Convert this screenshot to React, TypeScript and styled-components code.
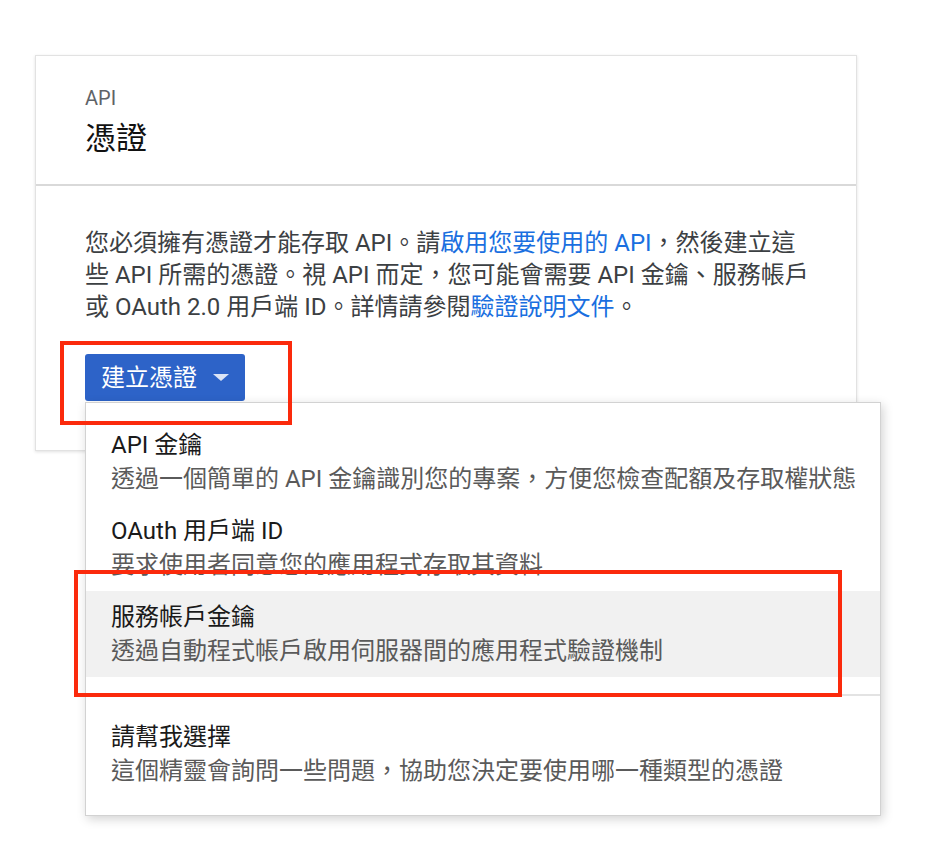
import React from "react";
import styled, { createGlobalStyle } from "styled-components";

const GlobalStyle = createGlobalStyle`
  html, body {
    margin: 0;
    padding: 0;
    background: #ffffff;
  }
  body {
    font-family: Roboto, "Noto Sans CJK TC", sans-serif;
  }
`;

const Page = styled.div`
  padding: 55px 0 0 35px;
  min-height: 848px;
  box-sizing: border-box;
`;

const Card = styled.section`
  width: 822px;
  box-sizing: border-box;
  background: #ffffff;
  border: 1px solid #e2e2e2;
  box-shadow: 0 1px 3px rgba(0, 0, 0, 0.12);
`;

const CardHeader = styled.header`
  padding: 30px 49px 25px;
  border-bottom: 2px solid #d9d9d9;
`;

const Eyebrow = styled.div`
  font-size: 20px;
  line-height: 24px;
  color: #5f6368;
`;

const Title = styled.h1`
  margin: 9px 0 0;
  font-size: 31px;
  line-height: 40px;
  font-weight: 400;
  color: #111111;
`;

const CardBody = styled.div`
  padding: 41px 49px 49px;
`;

const Intro = styled.p`
  margin: 0;
  font-size: 24px;
  line-height: 32px;
  color: #3c4043;
  white-space: nowrap;
`;

const Link = styled.a`
  color: #1a6fe0;
  text-decoration: none;
`;

const ActionWrap = styled.div`
  position: relative;
  margin-top: 31px;
  width: 160px;
`;

const PrimaryButton = styled.button`
  display: flex;
  align-items: center;
  gap: 16px;
  height: 47px;
  padding: 0 16px;
  border: none;
  border-radius: 3px;
  background: #2d63c8;
  color: #ffffff;
  font-family: inherit;
  font-size: 24px;
  line-height: 1;
  cursor: pointer;
`;

const Caret = styled.span`
  width: 0;
  height: 0;
  border-left: 8px solid transparent;
  border-right: 8px solid transparent;
  border-top: 7px solid #dbe4f6;
`;

const Menu = styled.ul`
  position: absolute;
  top: 48px;
  left: 0;
  z-index: 2;
  width: 796px;
  box-sizing: border-box;
  margin: 0;
  padding: 16px 0 18px;
  list-style: none;
  background: #ffffff;
  border: 1px solid #d2d2d2;
  box-shadow: 2px 3px 10px rgba(0, 0, 0, 0.18);
`;

const MenuItem = styled.li<{ $active?: boolean }>`
  position: relative;
  padding: 9px 25px;
  white-space: nowrap;
  background: ${(p) => (p.$active ? "#f1f1f1" : "transparent")};
  cursor: pointer;
`;

const ItemTitle = styled.div`
  font-size: 24px;
  line-height: 34px;
  color: #1a1a1a;
`;

const ItemDesc = styled.div`
  font-size: 24px;
  line-height: 34px;
  color: #5a5a5a;
`;

const Divider = styled.li`
  height: 2px;
  margin: 17px 0 15px;
  background: #e3e3e3;
`;

const Callout = styled.span<{ $top: number; $left: number; $w: number; $h: number }>`
  position: absolute;
  top: ${(p) => p.$top}px;
  left: ${(p) => p.$left}px;
  width: ${(p) => p.$w}px;
  height: ${(p) => p.$h}px;
  box-sizing: border-box;
  border: 4px solid #fb2a0c;
  z-index: 3;
  pointer-events: none;
`;

const items = [
  {
    title: "API 金鑰",
    desc: "透過一個簡單的 API 金鑰識別您的專案，方便您檢查配額及存取權狀態",
  },
  {
    title: "OAuth 用戶端 ID",
    desc: "要求使用者同意您的應用程式存取其資料",
  },
  {
    title: "服務帳戶金鑰",
    desc: "透過自動程式帳戶啟用伺服器間的應用程式驗證機制",
    active: true,
  },
];

export default function App() {
  return (
    <>
      <GlobalStyle />
      <Page>
        <Card>
          <CardHeader>
            <Eyebrow>API</Eyebrow>
            <Title>憑證</Title>
          </CardHeader>
          <CardBody>
            <Intro>
              您必須擁有憑證才能存取 API。請<Link href="#">啟用您要使用的 API</Link>，然後建立這
              <br />
              些 API 所需的憑證。視 API 而定，您可能會需要 API 金鑰、服務帳戶
              <br />
              或 OAuth 2.0 用戶端 ID。詳情請參閱<Link href="#">驗證說明文件</Link>。
            </Intro>
            <ActionWrap>
              <PrimaryButton>
                建立憑證
                <Caret />
              </PrimaryButton>
              <Callout $top={-13} $left={-25} $w={232} $h={84} />
              <Menu>
                {items.map((item) => (
                  <MenuItem key={item.title} $active={item.active}>
                    <ItemTitle>{item.title}</ItemTitle>
                    <ItemDesc>{item.desc}</ItemDesc>
                    {item.active && <Callout $top={-21} $left={-12} $w={768} $h={127} />}
                  </MenuItem>
                ))}
                <Divider />
                <MenuItem>
                  <ItemTitle>請幫我選擇</ItemTitle>
                  <ItemDesc>這個精靈會詢問一些問題，協助您決定要使用哪一種類型的憑證</ItemDesc>
                </MenuItem>
              </Menu>
            </ActionWrap>
          </CardBody>
        </Card>
      </Page>
    </>
  );
}
